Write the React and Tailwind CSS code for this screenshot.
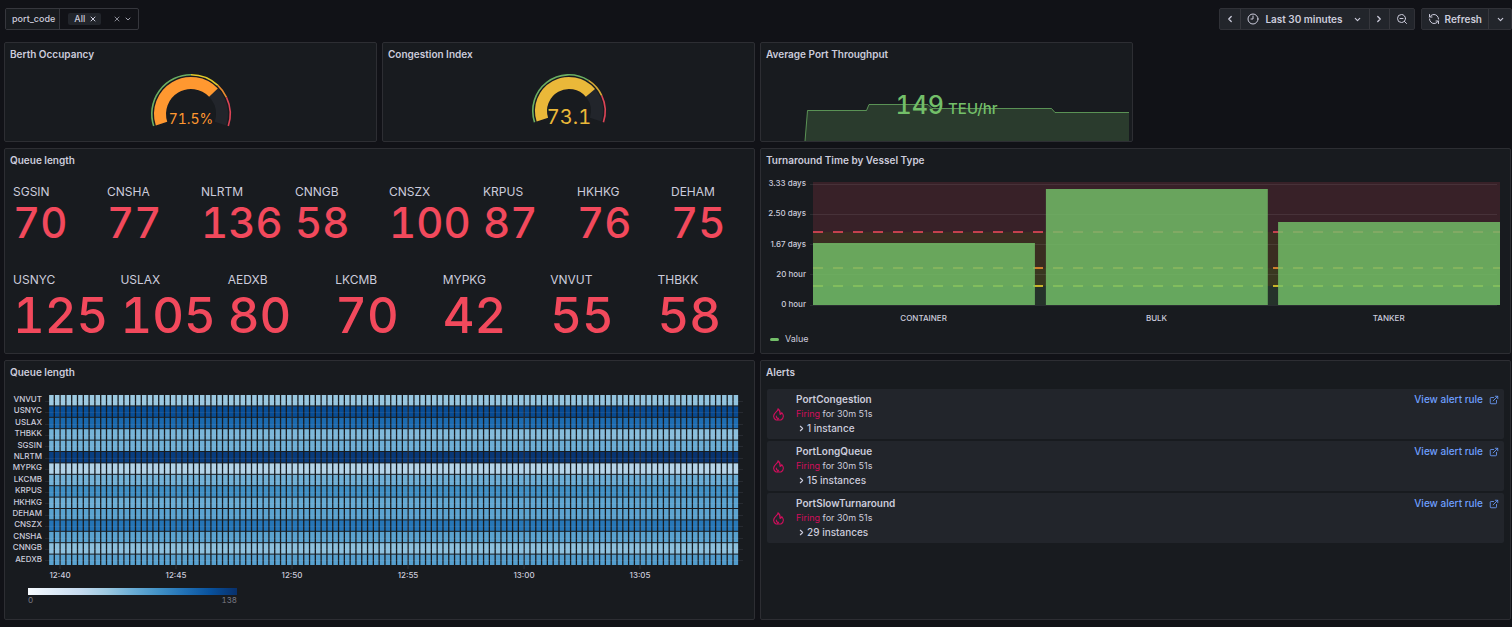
import React from "react";
import {
  ChevronDown,
  ChevronLeft,
  ChevronRight,
  Clock9,
  ExternalLink,
  RefreshCcw,
  X,
  ZoomOut,
} from "lucide-react";

const GREEN = "#73bf69";
const YELLOW = "#fade2a";
const ORANGE = "#ff9830";
const AMBER = "#eab839";
const RED = "#f2495c";

function Panel({ title, className = "", children }) {
  return (
    <section
      className={`relative flex min-w-0 flex-col rounded-xs border border-[#2d2e33] bg-[#181b1f] ${className}`}
    >
      <h2 className="px-[5px] pb-0.5 text-[10px] leading-[22px] font-semibold text-[#ccccdc]">
        {title}
      </h2>
      {children}
    </section>
  );
}

/* ---------- Toolbar ---------- */

function Toolbar() {
  const button =
    "flex h-full items-center justify-center border-l border-[#36373d] first:border-l-0";
  const group =
    "flex h-[22px] rounded-xs border border-[#303137] bg-[#22252b] text-[10px] font-semibold text-[#ccccdc]";
  return (
    <header className="flex items-center justify-between pl-px">
      <div className="flex h-[22px] items-stretch rounded-xs border border-[#36373d] text-[#ccccdc]">
        <span className="flex items-center border-r border-[#36373d] bg-[#181b1f] pr-1 pl-1.5 text-[9px] font-medium">
          port_code
        </span>
        <div className="flex items-center pr-1.5 pl-2">
          <span className="flex h-3 items-center gap-1 rounded-xs bg-[#22252b] pr-1 pl-1.5 text-[9px] font-medium">
            All
            <button type="button" aria-label="Remove All">
              <X size={8} strokeWidth={3} />
            </button>
          </span>
          <button type="button" aria-label="Clear port_code" className="ml-3 text-[#a0a1ad]">
            <X size={8} strokeWidth={2.5} />
          </button>
          <button type="button" aria-label="Open port_code options" className="ml-[3px] text-[#a0a1ad]">
            <ChevronDown size={8} strokeWidth={3} />
          </button>
        </div>
      </div>
      <div className="flex items-center gap-1.5">
        <div className={group}>
          <button type="button" aria-label="Move time range backwards" className={`${button} w-5`}>
            <ChevronLeft size={10} strokeWidth={3} />
          </button>
          <button type="button" className={`${button} gap-1.5 pr-[7px] pl-1.5`}>
            <Clock9 size={12} />
            Last 30 minutes
            <ChevronDown size={9} strokeWidth={3} className="ml-1" />
          </button>
          <button type="button" aria-label="Move time range forwards" className={`${button} w-5`}>
            <ChevronRight size={10} strokeWidth={3} />
          </button>
          <button type="button" aria-label="Zoom out time range" className={`${button} w-[25px]`}>
            <ZoomOut size={12} />
          </button>
        </div>
        <div className={group}>
          <button type="button" className={`${button} gap-[5px] px-1.5`}>
            <RefreshCcw size={12} />
            Refresh
          </button>
          <button type="button" aria-label="Auto refresh interval" className={`${button} w-[23px]`}>
            <ChevronDown size={9} strokeWidth={3} />
          </button>
        </div>
      </div>
    </header>
  );
}

/* ---------- Gauges ---------- */

// The dial sweeps 216 degrees, from 18 degrees below the left horizon to 18 below the right.
function dialPoint(cx, cy, r, fraction) {
  const a = ((198 - 216 * fraction) * Math.PI) / 180;
  return `${(cx + r * Math.cos(a)).toFixed(2)} ${(cy - r * Math.sin(a)).toFixed(2)}`;
}

function arc(cx, cy, r, from, to) {
  const large = (to - from) * 216 > 180 ? 1 : 0;
  return `M${dialPoint(cx, cy, r, from)}A${r} ${r} 0 ${large} 1 ${dialPoint(cx, cy, r, to)}`;
}

function Gauge({ label, fraction, text, color, radius, thickness, steps, fontClass }) {
  const cx = 50;
  const cy = radius + 1;
  const mid = radius - 3 - thickness / 2;
  return (
    <svg role="img" aria-label={label} width="100" height="60" className="mx-auto mt-1.5">
      {steps.map((s) => (
        <path
          key={s.from}
          d={arc(cx, cy, radius - 0.8, s.from, s.to)}
          stroke={s.color}
          strokeWidth="1.6"
          opacity="0.9"
          fill="none"
        />
      ))}
      <path d={arc(cx, cy, mid, 0, 1)} stroke="#22252b" strokeWidth={thickness} fill="none" />
      <path d={arc(cx, cy, mid, 0, fraction)} stroke={color} strokeWidth={thickness} fill="none" />
      <text x={cx} y="51" textAnchor="middle" fill={color} className={`tabular-nums ${fontClass}`}>
        {text}
      </text>
    </svg>
  );
}

/* ---------- Throughput ---------- */

function Throughput() {
  const line = "M44 38L46.5 7.5H105.5L108 1.5H167L171 5.5H290.5L294 9.5H368";
  return (
    <>
      <svg
        viewBox="0 0 371 38"
        preserveAspectRatio="none"
        className="absolute inset-x-0 bottom-0 h-[38px] w-full"
        aria-hidden="true"
      >
        <path d={`${line}V38Z`} fill={GREEN} opacity="0.2" />
        <path d={line} fill="none" stroke={GREEN} strokeWidth="1" opacity="0.7" />
      </svg>
      <p className="relative mt-5 flex items-baseline justify-center gap-1 font-medium text-[#73bf69] tabular-nums">
        <span className="text-[25px] leading-9">149</span>
        <span className="text-[15px]">TEU/hr</span>
      </p>
    </>
  );
}

/* ---------- Queue length ---------- */

const queueTop = [
  ["SGSIN", 70],
  ["CNSHA", 77],
  ["NLRTM", 136],
  ["CNNGB", 58],
  ["CNSZX", 100],
  ["KRPUS", 87],
  ["HKHKG", 76],
  ["DEHAM", 75],
];
const queueBottom = [
  ["USNYC", 125],
  ["USLAX", 105],
  ["AEDXB", 80],
  ["LKCMB", 70],
  ["MYPKG", 42],
  ["VNVUT", 55],
  ["THBKK", 58],
];

function Stat({ name, value, valueClass }) {
  return (
    <div className="min-w-0">
      <dt className="text-xs leading-4 text-[#ccccdc]">{name}</dt>
      <dd className={`font-medium whitespace-nowrap text-[#f2495c] tabular-nums ${valueClass}`}>
        {value}
      </dd>
    </div>
  );
}

function QueueStats() {
  return (
    <div className="flex flex-col gap-[26px] pt-[11px] pr-px pb-[9px] pl-2">
      <dl className="grid grid-cols-8 gap-x-3">
        {queueTop.map(([n, v]) => (
          <Stat key={n} name={n} value={v} valueClass="text-[42px] leading-[46px]" />
        ))}
      </dl>
      <dl className="grid grid-cols-7 gap-x-3">
        {queueBottom.map(([n, v]) => (
          <Stat key={n} name={n} value={v} valueClass="text-[49px] leading-[56px]" />
        ))}
      </dl>
    </div>
  );
}

/* ---------- Turnaround ---------- */

const bars = [
  { name: "CONTAINER", x: 0, top: 61 },
  { name: "BULK", x: 33.9, top: 7 },
  { name: "TANKER", x: 67.7, top: 40 },
];

function Turnaround() {
  const thresholds = [
    { y: 50, color: RED },
    { y: 86, color: ORANGE },
    { y: 104, color: YELLOW },
  ];
  return (
    <div className="flex flex-col pr-2.5">
      <div className="flex gap-[7px]">
        <div className="mt-[5px] flex h-[131px] w-[45px] flex-col justify-between text-right text-[8px] leading-[10px] font-medium whitespace-nowrap text-[#ccccdc]">
          <span>3.33 days</span>
          <span>2.50 days</span>
          <span>1.67 days</span>
          <span>20 hour</span>
          <span>0 hour</span>
        </div>
        <svg
          role="img"
          aria-label="Turnaround time by vessel type"
          className="mt-[9px] h-[144px] min-w-0 flex-1 overflow-visible"
        >
          <rect width="100%" height="50" y="0" fill={RED} opacity="0.15" />
          <rect width="100%" height="36" y="50" fill={ORANGE} opacity="0.15" />
          <rect width="100%" height="18" y="86" fill={YELLOW} opacity="0.15" />
          <rect width="100%" height="19" y="104" fill={GREEN} opacity="0.15" />
          {[2, 32, 62, 92, 123].map((y) => (
            <rect key={y} x="-3" y={y} width="100%" height="1" fill="#ccccdc" opacity="0.1" />
          ))}
          {thresholds.map((t) => (
            <line
              key={t.y}
              x1="0"
              x2="100%"
              y1={t.y}
              y2={t.y}
              stroke={t.color}
              strokeWidth="2"
              strokeDasharray="10 10"
              opacity="0.75"
            />
          ))}
          {bars.map((b) => (
            <g key={b.name}>
              <rect x={`${b.x}%`} y={b.top} width="32.3%" height={123 - b.top} fill={GREEN} opacity="0.83" />
              <text
                x={`${b.x + 16.1}%`}
                y="139"
                textAnchor="middle"
                fill="#ccccdc"
                className="text-[8px] font-medium"
              >
                {b.name}
              </text>
            </g>
          ))}
        </svg>
      </div>
      <div className="mt-[5px] flex items-center gap-1.5 pl-[9px] text-[9px] leading-4 text-[#ccccdc]">
        <span className="h-[3px] w-[9px] rounded-full bg-[#73bf69]" />
        Value
      </div>
    </div>
  );
}

/* ---------- Heatmap ---------- */

const heatRows = [
  ["VNVUT", 52, 56],
  ["USNYC", 122, 125],
  ["USLAX", 108, 105],
  ["THBKK", 66, 58],
  ["SGSIN", 67, 70],
  ["NLRTM", 130, 137],
  ["MYPKG", 44, 42],
  ["LKCMB", 66, 70],
  ["KRPUS", 88, 87],
  ["HKHKG", 68, 76],
  ["DEHAM", 76, 75],
  ["CNSZX", 102, 100],
  ["CNSHA", 76, 77],
  ["CNNGB", 58, 58],
  ["AEDXB", 76, 80],
];
const blues = [
  [247, 251, 255],
  [222, 235, 247],
  [198, 219, 239],
  [158, 202, 225],
  [107, 174, 214],
  [66, 146, 198],
  [33, 113, 181],
  [8, 81, 156],
  [8, 48, 107],
];

function heatColor(value) {
  const t = Math.min(value / 138, 0.9999) * 8;
  const i = Math.floor(t);
  const mix = blues[i].map((c, k) => Math.round(c + (blues[i + 1][k] - c) * (t - i)));
  return `rgb(${mix.join(",")})`;
}

const ROW = 11.4;
const COLUMNS = 119;
const ticks = ["12:40", "12:45", "12:50", "12:55", "13:00", "13:05"];

function Heatmap() {
  const edges = Array.from({ length: COLUMNS + 1 }, (_, i) => i);
  return (
    <div className="flex flex-col">
      <div className="flex gap-[3px] pr-[11px]">
        <div className="mt-[9px] grid h-[171px] w-[37px] grid-rows-[repeat(15,minmax(0,1fr))] text-right text-[8px] leading-[11px] font-medium text-[#ccccdc]">
          {heatRows.map(([name]) => (
            <span key={name}>{name}</span>
          ))}
        </div>
        <svg
          role="img"
          aria-label="Queue length by port over time"
          className="mt-2.5 h-[186px] min-w-0 flex-1 overflow-visible"
        >
          <defs>
            {heatRows.map(([name, from, to]) => (
              <linearGradient key={name} id={`heat-${name}`}>
                <stop offset="0" stopColor={heatColor(from)} />
                <stop offset="1" stopColor={heatColor(to)} />
              </linearGradient>
            ))}
          </defs>
          {heatRows.map(([name], i) => (
            <rect
              key={name}
              x="0.5%"
              y={i * ROW}
              width="98.9%"
              height={ROW - 1}
              fill={`url(#heat-${name})`}
            />
          ))}
          {edges.map((i) => (
            <line
              key={i}
              x1={`${0.5 + (i * 98.9) / COLUMNS}%`}
              x2={`${0.5 + (i * 98.9) / COLUMNS}%`}
              y1="0"
              y2="171"
              stroke="#181b1f"
              strokeWidth="1.3"
            />
          ))}
          {heatRows.map(([name], i) => (
            <rect
              key={name}
              y={Math.round((i + 0.5) * ROW)}
              width="100%"
              height="1"
              fill="#ccccdc"
              opacity="0.09"
            />
          ))}
          {ticks.map((t, i) => {
            const x = `${2.15 + i * 16.62}%`;
            return (
              <g key={t}>
                <line x1={x} x2={x} y1="0" y2="174" stroke="#ccccdc" opacity="0.12" />
                <text x={x} y="183" textAnchor="middle" fill="#ccccdc" className="text-[8px] font-medium">
                  {t}
                </text>
              </g>
            );
          })}
        </svg>
      </div>
      <div className="mt-[7px] ml-[23px] w-[209px] text-[8px] leading-[10px] text-[#7b7c86]">
        <div className="h-[7px] bg-[linear-gradient(to_right,#f7fbff,#deebf7,#c6dbef,#9ecae1,#6baed6,#4292c6,#2171b5,#08519c,#08306b)]" />
        <div className="flex justify-between tabular-nums">
          <span>0</span>
          <span>138</span>
        </div>
      </div>
    </div>
  );
}

/* ---------- Alerts ---------- */

const alerts = [
  { name: "PortCongestion", instances: "1 instance" },
  { name: "PortLongQueue", instances: "15 instances" },
  { name: "PortSlowTurnaround", instances: "29 instances" },
];

function Flame() {
  return (
    <svg
      viewBox="0 0 24 24"
      width="13"
      height="13"
      fill="none"
      stroke="#d10e5c"
      strokeWidth="2"
      strokeLinecap="round"
      strokeLinejoin="round"
      aria-hidden="true"
    >
      <path d="M11 1.5c1 4.5-8 7-8 13.500 0 3 2 5.500 4.500 7h9c2.500-1.500 4.500-4 4.500-7 0-3-1.500-4.500-3-6.500-.5 2-1.500 3-3 3.500.5-4-.5-8-4-10.500z" />
      <path d="M8 15c0 2.500 1.500 4 4 4l-1.500 2.500" />
    </svg>
  );
}

function Alerts() {
  return (
    <ul className="mt-1 flex flex-col gap-0.5 px-1.5 text-[10px] font-medium text-[#ccccdc]">
      {alerts.map((a) => (
        <li key={a.name} className="flex h-[50px] items-start rounded-xs bg-[#22252b] px-[5px] pt-[3px]">
          <span className="flex h-11 items-center">
            <Flame />
          </span>
          <div className="ml-[11px] flex flex-1 flex-col">
            <span className="leading-[15px] font-semibold">{a.name}</span>
            <span className="text-[9px] leading-[14px] font-normal">
              <span className="text-[#d10e5c]">Firing</span> for 30m 51s
            </span>
            <button type="button" className="flex items-center gap-px pl-px leading-[14px]">
              <ChevronRight size={9} strokeWidth={3} />
              {a.instances}
            </button>
          </div>
          <a href="#alert-rule" className="flex items-center gap-1.5 leading-[15px] text-[#6e9fff]">
            View alert rule
            <ExternalLink size={10} />
          </a>
        </li>
      ))}
    </ul>
  );
}

export default function App() {
  return (
    <main className="flex min-h-screen flex-col gap-3 bg-[#111217] pt-2 pl-1 font-['Inter',sans-serif]">
      <Toolbar />
      <div className="grid grid-cols-4 gap-x-[5px] gap-y-1.5 pr-px">
        <Panel title="Berth Occupancy" className="min-h-[100px]">
          <Gauge
            label="Berth occupancy"
            fraction={0.715}
            text="71.5%"
            color={ORANGE}
            radius={40}
            thickness={12}
            fontClass="text-[14px]"
            steps={[
              { from: 0, to: 0.5, color: GREEN },
              { from: 0.5, to: 0.7, color: YELLOW },
              { from: 0.7, to: 0.8, color: ORANGE },
              { from: 0.8, to: 1, color: RED },
            ]}
          />
        </Panel>
        <Panel title="Congestion Index" className="min-h-[100px]">
          <Gauge
            label="Congestion index"
            fraction={0.731}
            text="73.1"
            color={AMBER}
            radius={37}
            thickness={12}
            fontClass="text-[20px]"
            steps={[
              { from: 0, to: 0.65, color: GREEN },
              { from: 0.65, to: 0.8, color: AMBER },
              { from: 0.8, to: 1, color: RED },
            ]}
          />
        </Panel>
        <Panel title="Average Port Throughput" className="min-h-[100px]">
          <Throughput />
        </Panel>
        <Panel title="Queue length" className="col-span-2 col-start-1">
          <QueueStats />
        </Panel>
        <Panel title="Turnaround Time by Vessel Type" className="col-span-2">
          <Turnaround />
        </Panel>
        <Panel title="Queue length" className="col-span-2 min-h-[260px]">
          <Heatmap />
        </Panel>
        <Panel title="Alerts" className="col-span-2 min-h-[260px]">
          <Alerts />
        </Panel>
      </div>
    </main>
  );
}
